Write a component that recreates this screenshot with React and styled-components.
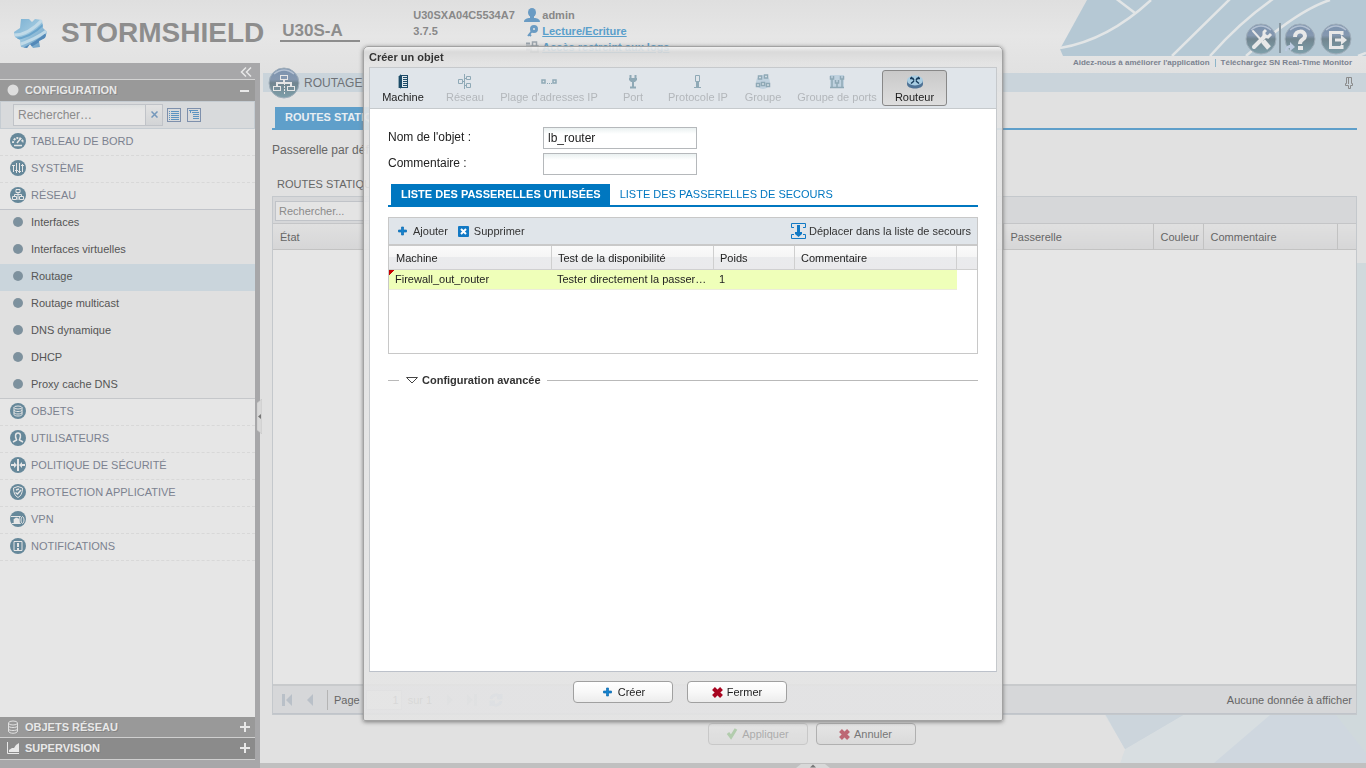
import React from "react";
import styled, { createGlobalStyle, css } from "styled-components";

const GlobalStyle = createGlobalStyle`
  *, *::before, *::after { box-sizing: border-box; }
  body {
    margin: 0;
    background: #e1e1e1;
    font-family: "Liberation Sans", Arial, sans-serif;
    font-size: 11px;
    line-height: 14px;
    color: #222;
  }
  button, input { font: inherit; color: inherit; }
  button { cursor: pointer; }
  a { color: inherit; text-decoration: none; }
  h1, h2, p, ul { margin: 0; padding: 0; font-size: inherit; font-weight: inherit; list-style: none; }
  svg { display: block; flex: none; }
`;

/* ---------- page shell ---------- */

const Shell = styled.div`
  display: flex;
  flex-direction: column;
  min-height: 100vh;
`;

const Header = styled.header`
  position: relative;
  display: flex;
  height: 73px;
  background: linear-gradient(#dfdfdf, #e6e6e6 50%, #e1e1e1);
`;

const HeaderArt = styled.svg`
  position: absolute;
  top: 0;
  right: 0;
`;

const Brand = styled.div`
  display: flex;
  align-items: flex-start;
  padding: 16px 0 0 12px;
`;

const BrandName = styled.span`
  margin: 1px 0 0 12px;
  font-size: 28px;
  line-height: 32px;
  font-weight: bold;
  color: #8d8d8d;
`;

const Model = styled.span`
  width: 80px;
  height: 26px;
  margin-left: 16px;
  padding-left: 2px;
  font-size: 17px;
  line-height: 30px;
  font-weight: bold;
  color: #8d8d8d;
  border-bottom: 2px solid #8d8d8d;
`;

const HeaderInfo = styled.div`
  display: flex;
  flex-direction: column;
  gap: 2px;
  width: 111px;
  margin-left: 53px;
  padding-top: 8px;
  font-weight: bold;
  color: #888;
`;

const UserInfo = styled.ul`
  display: flex;
  flex-direction: column;
  gap: 2px;
  padding-top: 8px;
  font-weight: bold;
  color: #888;
  li { display: flex; align-items: center; gap: 2px; height: 14px; }
  a { color: #5a9fcb; text-decoration: underline; }
`;

const HeaderTools = styled.div`
  position: relative;
  display: flex;
  flex-direction: column;
  align-items: flex-end;
  margin-left: auto;
  padding: 23px 14px 0 0;
`;

const ToolRow = styled.div`
  display: flex;
  height: 34px;
`;

const RoundTool = styled.button`
  width: 32px;
  height: 32px;
  margin-left: ${(p) => p.$gap || 0}px;
  padding: 0;
  border: 0;
  background: none;
`;

const ToolDivider = styled.span`
  width: 2px;
  height: 30px;
  margin-left: 2px;
  background: #8797a1;
`;

const HelpLinks = styled.nav`
  display: flex;
  align-items: center;
  font-size: 8px;
  line-height: 12px;
  font-weight: bold;
  color: #7b8290;
  span { width: 1px; height: 8px; margin: 0 5px; background: #8db5c9; }
`;

const Columns = styled.div`
  display: flex;
  flex: 1;
`;

/* ---------- sidebar ---------- */

const Sidebar = styled.aside`
  position: relative;
  display: flex;
  flex-direction: column;
  width: 260px;
  flex: none;
  margin-top: -10px;
  padding: 0 5px 8px 0;
  background: #a7a7a9;
`;

const CollapseRow = styled.div`
  display: flex;
  justify-content: flex-end;
  align-items: center;
  height: 17px;
  padding: 1px 2px 0 0;
  border-bottom: 1px solid #d3d3d3;
  button { padding: 0; border: 0; background: none; }
`;

const SectionBar = styled.button`
  display: flex;
  align-items: center;
  gap: 6px;
  width: 100%;
  height: ${(p) => p.$height || 21}px;
  padding: 0 5px 1px 7px;
  border: 0;
  border-bottom: ${(p) => (p.$line ? "1px solid #cfcfcf" : "0")};
  background: ${(p) => (p.$dark ? "#8b8b8b" : "#999")};
  color: #e8e8e8;
  font-weight: bold;
  text-align: left;
  text-shadow: 1px 1px 0 #848484;
  span { flex: 1; }
`;

const MenuSearch = styled.form`
  display: flex;
  align-items: center;
  height: 28px;
  padding: 0 0 0 12px;
  background: #d8dadc;
  border: 1px solid #c5ccd2;
`;

const MenuSearchInput = styled.input`
  width: 133px;
  height: 22px;
  padding: 0 4px;
  border: 1px solid #c0c3c8;
  background: linear-gradient(#dde0e0, #e6e6e6 5px);
  font-size: 12px;
  &::placeholder { color: #8b8b8b; opacity: 1; }
`;

const ClearButton = styled.button`
  display: flex;
  align-items: center;
  justify-content: center;
  width: 17px;
  height: 22px;
  margin-right: 4px;
  padding: 0 0 2px;
  border: 1px solid #c0c3c8;
  border-left: 0;
  background: linear-gradient(#e2e2e2, #d2d4d6);
`;

const ViewButton = styled.button`
  width: 14px;
  height: 14px;
  margin-right: 6px;
  padding: 0;
  border: 0;
  background: none;
`;

const Menu = styled.nav`
  flex: 1;
  background: #e6e6e6;
`;

const MenuItem = styled.a`
  display: flex;
  align-items: center;
  gap: 5px;
  height: 27px;
  padding: 0 10px 2px;
  color: #7c8290;
  border-bottom: 1px ${(p) => (p.$open ? "solid #c1c4ca" : "dashed #d8d8d8")};
`;

const SubMenu = styled.ul`
  background: #e0e0e0;
  border-bottom: 1px solid #c5c7ca;
  li:last-child a { height: 26px; }
`;

const SubItem = styled.a`
  display: flex;
  align-items: center;
  gap: 8px;
  height: 27px;
  padding: 0 13px 3px;
  color: #555;
  background: ${(p) => (p.$active ? "linear-gradient(#cad5dc, #cad5dc)" : "transparent")};
  &::before {
    content: "";
    width: 10px;
    height: 10px;
    border-radius: 50%;
    background: radial-gradient(#7b919f, #7e919d 60%, #93a1aa);
  }
`;

const SideHandle = styled.button`
  position: absolute;
  top: 336px;
  right: -2px;
  z-index: 1;
  padding: 0;
  border: 0;
  background: none;
`;

/* ---------- main area ---------- */

const Main = styled.main`
  position: relative;
  display: flex;
  flex-direction: column;
  flex: 1;
  min-width: 0;
  background: #e1e1e1;
`;

const MainArt = styled.svg`
  position: absolute;
  right: 0;
  bottom: 5px;
`;

const TitleBar = styled.div`
  display: flex;
  align-items: center;
  height: 19px;
  margin-left: 3px;
  padding: 0 12px 0 5px;
  gap: 4px;
  background: #cad4db;
  color: #6e7277;
  font-size: 12px;
  h1 { flex: 1; }
  > svg { position: relative; }
`;

const Workspace = styled.div`
  position: relative;
  display: flex;
  flex-direction: column;
  flex: 1;
  padding: 15px 9px 0 12px;
`;

const PageTabs = styled.div`
  display: flex;
  padding-left: 3px;
  border-bottom: 2px solid #5f9fca;
  button {
    height: 21px;
    padding: 0 10px 1px;
    border: 0;
    background: #5f9fca;
    color: #e8eef2;
    font-weight: bold;
  }
`;

const GatewayLine = styled.p`
  padding: 13px 0;
  font-size: 12px;
  color: #666;
`;

const PanelTitle = styled.h2`
  padding: 7px 5px 5px;
  color: #666;
`;

const RoutePanel = styled.section`
  display: flex;
  flex-direction: column;
  flex: 1;
  border: 1px solid #c4c8cc;
  background: #e6e6e6;
`;

const RouteToolbar = styled.div`
  height: 27px;
  padding: 4px 2px 0;
  background: #d6d7d9;
  border-bottom: 1px solid #c4c5c7;
  input {
    width: 180px;
    height: 20px;
    padding: 0 3px;
    border: 1px solid #c0c3c8;
    background: #e4e4e4;
  }
  input::placeholder { color: #8b8b8b; opacity: 1; }
`;

const RouteTable = styled.table`
  width: 100%;
  table-layout: fixed;
  border-collapse: collapse;
  color: #666;
  th {
    height: 25px;
    padding: 1px 6px 0 7px;
    font-weight: normal;
    text-align: left;
    background: linear-gradient(#e0e0e0, #d6d6d7);
    border-right: 1px solid #c2c2c2;
    border-bottom: 1px solid #c2c2c2;
  }
  th:last-child { border-right: 0; }
`;

const Pager = styled.div`
  display: flex;
  align-items: center;
  gap: 11px;
  height: 30px;
  margin-top: auto;
  padding: 0 4px 0 8px;
  border-top: 2px solid #c8cacc;
  border-bottom: 1px solid #c0c4ca;
  background: #d6d7d9;
  color: #666;
  button { padding: 0; border: 0; background: none; }
  label { display: flex; align-items: center; gap: 6px; padding-left: 6px; border-left: 1px solid #b4b4b4; }
  input { width: 36px; height: 20px; border: 1px solid #c0c3c8; background: #e6e6e6; text-align: right; }
  p { margin-left: auto; }
`;

const ApplyRow = styled.div`
  display: flex;
  justify-content: center;
  gap: 8px;
  height: 48px;
  padding: 8px 6px 0 0;
`;

const PushButton = styled.button`
  display: flex;
  align-items: center;
  justify-content: center;
  gap: 4px;
  width: 100px;
  height: 22px;
  padding: 0;
  border: 1px solid #a0a0a0;
  border-radius: 4px;
  color: #222;
  background: linear-gradient(#fff, #f8f8f8 50%, #ececec);
  ${(p) => p.$muted && css`
    border-color: #b0b0b0;
    color: #777;
    background: linear-gradient(#e5e5e5, #dadada);
  `}
  &:disabled { opacity: 0.5; }
`;

const BottomBar = styled.div`
  display: flex;
  justify-content: center;
  height: 5px;
  background: #c0c0c0;
  button { display: flex; align-items: center; padding: 0; border: 0; background: none; }
`;

/* ---------- dialog ---------- */

const Overlay = styled.div`
  position: fixed;
  inset: 0;
  z-index: 10;
  display: flex;
  align-items: center;
  justify-content: center;
  padding-bottom: 1px;
`;

const Dialog = styled.section`
  display: flex;
  flex-direction: column;
  width: 640px;
  max-width: 100%;
  min-height: 675px;
  padding: 0 5px;
  border: 1px solid #a2a2a2;
  border-radius: 5px 5px 2px 2px;
  background: linear-gradient(rgba(242, 242, 242, 0.9), rgba(216, 216, 216, 0.9) 5px, rgba(228, 228, 228, 0.9) 17px);
  box-shadow: 0 1px 4px #777;
`;

const DialogTitle = styled.h1`
  height: 20px;
  line-height: 20px;
  font-weight: bold;
  color: #333;
`;

const DialogPanel = styled.div`
  display: flex;
  flex-direction: column;
  flex: 1;
  border: 1px solid #c6c9cc;
  border-bottom-color: #bcc1ca;
  background: #fff;
`;

const TypeBar = styled.div`
  display: flex;
  align-items: center;
  height: 41px;
  border-bottom: 1px solid #c6cacd;
  background: #e0e5ea;
`;

const TypeButton = styled.button`
  display: flex;
  flex-direction: column;
  align-items: center;
  width: ${(p) => p.$width}px;
  height: 36px;
  padding: 3px 0 0;
  border: 1px solid transparent;
  border-radius: 3px;
  background: none;
  white-space: nowrap;
  color: #1c1c1c;
  &:disabled { color: #b3b7bb; cursor: default; }
  &[aria-pressed="true"] {
    border-color: #888;
    background: linear-gradient(#c9c9c9, #dedede);
  }
`;

const DialogBody = styled.div`
  flex: 1;
  padding: 18px 18px 0;
`;

const FieldRow = styled.div`
  display: flex;
  height: 22px;
  margin-bottom: 4px;
  font-size: 12px;
  label { width: 155px; line-height: 20px; }
  input {
    width: 154px;
    padding: 0 4px;
    border: 1px solid #b5b8bb;
    background: linear-gradient(#eaf0f0, #fff 6px);
  }
`;

const ListTabs = styled.div`
  display: flex;
  margin-top: 9px;
  padding-left: 3px;
  border-bottom: 2px solid #0077c0;
`;

const ListTab = styled.button`
  height: 21px;
  padding: 0 9px 1px 10px;
  border: 0;
  background: ${(p) => (p.$active ? "#0077c0" : "transparent")};
  color: ${(p) => (p.$active ? "#fff" : "#0077c0")};
  font-weight: ${(p) => (p.$active ? "bold" : "normal")};
`;

const GatewayBox = styled.div`
  height: 137px;
  margin-top: 10px;
  border: 1px solid #c8c8c8;
`;

const GatewayTools = styled.div`
  display: flex;
  align-items: center;
  gap: 8px;
  height: 28px;
  padding: 0 6px 0 7px;
  border-bottom: 2px solid #c9c9c9;
  background: #e0e5ea;
`;

const FlatButton = styled.button`
  display: flex;
  align-items: center;
  gap: ${(p) => (p.$end ? "3px" : "4px")};
  margin-left: ${(p) => (p.$end ? "auto" : "0")};
  padding: 0;
  border: 0;
  background: none;
  color: #333;
`;

const GatewayTable = styled.table`
  width: 100%;
  table-layout: fixed;
  border-collapse: separate;
  border-spacing: 0;
  th, td {
    padding: 0 6px 2px 5px;
    font-weight: normal;
    text-align: left;
    white-space: nowrap;
    overflow: hidden;
    text-overflow: ellipsis;
  }
  th {
    height: 24px;
    padding: 0 6px;
    background: linear-gradient(#fbfbfb, #f5f5f5 50%, #eaebed 50%, #eaeaec);
    border-right: 1px solid #cfcfcf;
    border-bottom: 1px solid #d0d0d0;
  }
  th:first-child { padding-left: 7px; }
  th:last-child { border-right: 0; }
  td { height: 20px; background: #efffb9; border-bottom: 1px solid #ececdc; }
  td:last-child { background: none; border: 0; }
  td:first-child {
    padding-left: 6px;
    background: linear-gradient(135deg, #c80000 4px, transparent 4px) no-repeat, #efffb9;
  }
`;

const Advanced = styled.div`
  display: flex;
  align-items: center;
  margin-top: 19px;
  &::before, &::after { content: ""; height: 1px; background: #b9b9b9; }
  &::before { width: 11px; }
  &::after { flex: 1; margin-left: 6px; }
  button {
    display: flex;
    align-items: center;
    gap: 4px;
    margin-left: 7px;
    padding: 0 0 1px;
    border: 0;
    background: none;
    font-weight: bold;
    color: #333;
  }
`;

const DialogActions = styled.div`
  display: flex;
  justify-content: center;
  gap: 14px;
  height: 48px;
  padding: 9px 6px 0 0;
`;

/* ---------- drawings ---------- */

const Snowflake = () => (
  <svg width="37" height="36" viewBox="0 0 37 36">
    <defs>
      <linearGradient id="flake" x1="0" y1="0" x2="1" y2="1">
        <stop offset="0" stopColor="#72abd0" />
        <stop offset=".45" stopColor="#9cc6de" />
        <stop offset="1" stopColor="#598fbb" />
      </linearGradient>
      <clipPath id="flake-edge">
        <path d="M9 3 17 3 20 6 23 3 30 4 31 12 35 16 33 22 27 25 28 31 21 32 18 28 15 32 9 31 8 24 3 21 2 16 8 12Z" />
      </clipPath>
    </defs>
    <g clipPath="url(#flake-edge)">
      <rect width="37" height="36" fill="url(#flake)" />
      <path d="M0 19C12 20 22 13 31 3M6 29C19 25 28 20 36 14" stroke="#c0dae8" strokeWidth="3" fill="none" />
      <path d="M3 23C16 22 25 15 32 8" stroke="#6ba5cc" strokeWidth="2" fill="none" />
      <path d="M12 33C20 29 27 25 34 19" stroke="#5489b8" strokeWidth="3" fill="none" />
    </g>
  </svg>
);

const Glossy = ({ children }) => (
  <svg width="32" height="32" viewBox="0 0 32 32">
    <defs>
      <linearGradient id="gloss" x1="0" y1="0" x2="0" y2="1">
        <stop offset="0" stopColor="#7b92ae" />
        <stop offset=".38" stopColor="#8598b0" />
        <stop offset=".5" stopColor="#71858f" />
        <stop offset="1" stopColor="#7fa0ab" />
      </linearGradient>
    </defs>
    <circle cx="16" cy="16" r="15" fill="url(#gloss)" stroke="#a0aeba" strokeWidth="1" />
    <path d="M6 7Q16-1 26 7" stroke="#b4c1d2" strokeWidth="1.5" fill="none" />
    {children}
  </svg>
);

const NetGlyph = () => (
  <g stroke="#e6e6e6" fill="none" shapeRendering="crispEdges">
    <path d="M12.500 8.500h7v4h-7zM5.500 19.500h7v4h-7zM19.500 19.500h7v4h-7zM9 19v-3h14v3M16 13v3" strokeWidth="1.500" />
    <path d="M16.500 16v11" strokeDasharray="2 1" />
  </g>
);

const HeaderIcon = {
  tools: (
    <g stroke="#e8e8e8" fill="none">
      <path d="M8 8 18 19" strokeWidth="2" strokeLinecap="round" />
      <path d="M18 18 24 25" strokeWidth="5" />
      <path d="M20 13 9 24" strokeWidth="4" strokeLinecap="round" />
      <path d="M21 7 19 9 19 13 23 14 26 11" strokeWidth="3" />
    </g>
  ),
  help: (
    <g fill="none">
      <path d="M11 14C11 7 21 7 21 13C21 17 16 16 16 21" stroke="#e8e8e8" strokeWidth="4" />
      <rect x="14" y="23" width="5" height="4" fill="#e8e8e8" />
      <path d="M1 28C1 24 4 22 6 22V19L11 24 6 28V25C4 25 3 26 3 28Z" fill="#bdcbe0" />
    </g>
  ),
  exit: (
    <g stroke="#e8e8e8" strokeWidth="3" fill="none">
      <path d="M22 12V9.500H10.500V24.500H22V22M15 17H22" />
      <path d="M21 12 27 17 21 22Z" fill="#e8e8e8" stroke="none" />
    </g>
  ),
};

const menuGlyphs = {
  board: <><path d="M3 10a5 5 0 0 1 10 0" strokeDasharray="2 1" strokeWidth="2" /><path d="M7 10 11 5M4 12.500h8" strokeWidth="1.500" /></>,
  system: <path d="M3.500 5v7M6.500 3v10M9.500 3v10M12.500 4v8M2 5.500h3M5 10.500h3M8 11.500h3M11 5.500h3" />,
  network: <path d="M6 2.500h4v3H6zM2.500 9.500h4v3h-4zM9.500 9.500h4v3h-4zM8 6v7M4.500 10V7.500h7V10" />,
  objects: <><ellipse cx="8" cy="4.500" rx="4" ry="1.500" /><path d="M4 4.500v7c0 2 8 2 8 0v-7M4 7c0 2 8 2 8 0M4 9.500c0 2 8 2 8 0" /></>,
  users: <path d="M6.500 9C5 7 5 3 8 3s3 4 1.500 6M6.500 9v1L3 12M9.500 9v1L13 12" strokeWidth="1.500" />,
  policy: <><path d="M8 2v12M1 8h4M15 8h-4" strokeWidth="2" /><path d="M4 5 7 8 4 11ZM12 5 9 8 12 11Z" fill="#e6e6e6" stroke="none" /></>,
  shield: <><path d="M8 2.500 12.500 4C12.500 9 11 12 8 13.500 5 12 3.500 9 3.500 4Z" /><path d="M5.500 8.500 7.500 10 11 6M6 6 9 5" strokeWidth="1.500" /></>,
  vpn: <><path d="M1 5.500h9.500M2 12.500h8.500M10.500 5.500c-2 1-2 6 0 7M12.500 5.500c-2 1-2 6 0 7 2-1 2-6 0-7" /><path d="M4 8h5v4H4zM5.500 8V7h2v1" fill="#e6e6e6" stroke="#e6e6e6" strokeWidth=".7" /></>,
  notif: <><path d="M4 3.500h8v9H4z" /><path d="M8 5v4M8 10v2" strokeWidth="2" /></>,
};

const MenuIcon = ({ name }) => (
  <svg width="16" height="16" viewBox="0 0 16 16">
    <circle cx="8" cy="8" r="8" fill="#66889a" />
    <g stroke="#e6e6e6" fill="none">{menuGlyphs[name]}</g>
  </svg>
);

const ListIcon = ({ tree }) => (
  <svg width="14" height="14" viewBox="0 0 14 14" fill="none" stroke="#5c93c0" shapeRendering="crispEdges">
    <rect x=".5" y=".5" width="13" height="13" stroke="#7e90ac" />
    {tree ? <path d="M2 2.500h9M5 4.500h7M6 6.500h6M6 8.500h6M6 10.500h6M3.500 3v2" /> : <path d="M2 3.500h1M4 3.500h8M2 5.500h1M4 5.500h8M2 7.500h1M4 7.500h8M2 9.500h1M4 9.500h8M2 11.500h1M4 11.500h8" />}
  </svg>
);

const Plus = () => (
  <svg width="10" height="10" viewBox="0 0 10 10" stroke="#e8e8e8" strokeWidth="2"><path d="M5 0v10M0 5h10" /></svg>
);

const BluePlus = () => (
  <svg width="13" height="12" viewBox="0 0 13 12"><path d="M5.500 2h2v3h3v2h-3v3h-2V7h-3V5h3Z" fill="#1583cf" stroke="#0e6bb0" strokeWidth=".7" /></svg>
);

const RedCross = ({ muted }) => (
  <svg width="11" height="11" viewBox="0 0 11 11" stroke={muted ? "#bd6875" : "#a80520"} strokeWidth="4">
    <path d="M1.500 1.500 9.500 9.500M9.500 1.500 1.500 9.500" />
  </svg>
);

const typeIcons = {
  machine: <g shapeRendering="crispEdges"><path d="M3 3 5 1v13L3 13Z" fill="#3b6a88" /><path d="M5.500 1.500h7v12h-7z" fill="#e0e8ec" stroke="#1d4b68" /><path d="M8 3.500h4M8 5.500h4M8 7.500h4M8 9.500h4M8 11.500h4M6.500 2v12M4.500 2v12" stroke="#1d4b68" /></g>,
  network: <path d="M1.500 5.500h4v4h-4zM9.500 2.500h4v3h-4zM9.500 9.500h4v4h-4zM7.500 0v15M6 7.500h2M8 4.500h2M8 11.500h2" />,
  range: <><path d="M1 6h3v3h-3zM12 6h3v3h-3z" strokeWidth="1.500" /><path d="M6 9.500h1M8 9.500h1M10 9.500h1" /></>,
  port: <><path d="M5.500 1v4M10.500 1v4M8 8v5M5 13.500h6" strokeWidth="2" /><path d="M4 4h8v2L10 8H6L4 6Z" fill="#8fa9b6" stroke="none" /></>,
  protocol: <><path d="M5.500 1.500h4v6h-4z" /><path d="M7.500 8v5" strokeWidth="3" /><path d="M4 13.500h7" /></>,
  group: <><circle cx="8" cy="8" r="7" fill="#c0d2df" stroke="none" /><path d="M3.500 2h3v3h-3zM9.500 1h3v3h-3zM1.500 9.500h3v3h-3zM6.500 8.500h3v3h-3zM11.500 9.500h3v3h-3z" fill="#e7edf0" strokeWidth="1.500" /></>,
  ports: <><path d="M1 1h14v13H1z" fill="#c0d2df" stroke="none" /><path d="M1.500 2v3h3V2M3 5v8M6.500 6v3h3V6M8 9v5M11.500 2v3h3V2M13 5v8M1 13.500h14" strokeWidth="1.500" /></>,
  router: <><path d="M0 6v4c0 6 16 6 16 0V6Z" fill="#4f7396" stroke="none" /><ellipse cx="8" cy="6.500" rx="8" ry="5" fill="#a9cde2" stroke="none" /><path d="M3 4.500 6 4.500 7 6.500M13 4.500 10 4.500 9 6.500M4 9.500 7 7M12 9.500 9 7M4 3 6.500 5.500M12 3 9.500 5.500" stroke="#173c5c" strokeWidth="1.500" /></>,
};

const TypeIcon = ({ name }) => (
  <svg width="16" height="16" viewBox="0 0 16 16" fill="none" stroke="#8fa9b6">{typeIcons[name]}</svg>
);

/* ---------- data ---------- */

const types = [
  ["machine", "Machine", 66], ["network", "Réseau", 58], ["range", "Plage d'adresses IP", 110],
  ["port", "Port", 58], ["protocol", "Protocole IP", 72], ["group", "Groupe", 58],
  ["ports", "Groupe de ports", 90], ["router", "Routeur", 65],
];

const firstItems = [["board", "TABLEAU DE BORD"], ["system", "SYSTÈME"], ["network", "RÉSEAU"]];
const subItems = ["Interfaces", "Interfaces virtuelles", "Routage", "Routage multicast", "DNS dynamique", "DHCP", "Proxy cache DNS"];
const lastItems = [
  ["objects", "OBJETS"], ["users", "UTILISATEURS"], ["policy", "POLITIQUE DE SÉCURITÉ"],
  ["shield", "PROTECTION APPLICATIVE"], ["vpn", "VPN"], ["notif", "NOTIFICATIONS"],
];

/* ---------- sections ---------- */

const TopHeader = () => (
  <Header>
    <HeaderArt width="306" height="56" viewBox="0 0 306 56">
      <path d="M27 0H306V56H3L0 49Z" fill="#b5c8d4" />
      <path d="M0 48Q48 40 91 0M54-3 75 13M112 56 171-2M150 56Q180 22 213-1M186 56Q238 10 270 0M298 56 306 53" stroke="#e2e5e6" strokeWidth="2.500" fill="none" />
    </HeaderArt>
    <Brand>
      <Snowflake />
      <BrandName>STORMSHIELD</BrandName>
      <Model>U30S-A</Model>
    </Brand>
    <HeaderInfo><span>U30SXA04C5534A7</span><span>3.7.5</span></HeaderInfo>
    <UserInfo>
      <li>
        <svg width="16" height="14" viewBox="0 0 16 14" fill="#6a9bc3"><ellipse cx="8" cy="4.500" rx="4" ry="4.500" /><path d="M6 8h4v2c3 0 6 1 6 4H0c0-3 3-4 6-4Z" /></svg>
        admin
      </li>
      <li>
        <svg width="16" height="14" viewBox="0 0 16 14" fill="none" stroke="#6a9bc3"><circle cx="10" cy="5" r="2.500" strokeWidth="3" /><path d="M8 7 4 12M5 10l2 2" strokeWidth="2" /></svg>
        <a href="#mode">Lecture/Ecriture</a>
      </li>
      <li>
        <svg width="16" height="14" viewBox="0 0 16 14" fill="none" stroke="#9aa4ac"><path d="M2 3.500h4M2 6.500h4M2 9.500h4" strokeWidth="2" /><path d="M7 6h7v6H7zM8.500 6V2h4v4" strokeWidth="1.500" /></svg>
        <a href="#logs">Accès restreint aux logs</a>
      </li>
    </UserInfo>
    <HeaderTools>
      <ToolRow>
        <RoundTool aria-label="Outils"><Glossy>{HeaderIcon.tools}</Glossy></RoundTool>
        <ToolDivider />
        <RoundTool $gap={3} aria-label="Aide"><Glossy>{HeaderIcon.help}</Glossy></RoundTool>
        <RoundTool $gap={4} aria-label="Quitter"><Glossy>{HeaderIcon.exit}</Glossy></RoundTool>
      </ToolRow>
      <HelpLinks>
        <a href="#aide">Aidez-nous à améliorer l'application</a>
        <span />
        <a href="#monitor">Téléchargez SN Real-Time Monitor</a>
      </HelpLinks>
    </HeaderTools>
  </Header>
);

const SideMenu = () => (
  <Sidebar>
    <CollapseRow>
      <button aria-label="Replier le menu">
        <svg width="13" height="10" viewBox="0 0 13 10" fill="none" stroke="#e8e8e8" strokeWidth="1.500"><path d="M6 .5 1.500 5 6 9.500M11 .5 6.500 5 11 9.500" /></svg>
      </button>
    </CollapseRow>
    <SectionBar>
      <svg width="12" height="12" viewBox="0 0 12 12"><circle cx="6" cy="6" r="5.500" fill="#dedede" /></svg>
      <span>CONFIGURATION</span>
      <svg width="10" height="10" viewBox="0 0 10 10" stroke="#e8e8e8" strokeWidth="2"><path d="M0 6h9" /></svg>
    </SectionBar>
    <MenuSearch>
      <MenuSearchInput aria-label="Rechercher" placeholder="Rechercher…" />
      <ClearButton type="button" aria-label="Effacer">
        <svg width="7" height="7" viewBox="0 0 7 7" stroke="#7598bb" strokeWidth="1.500"><path d="M.5.5 6.500 6.500M6.500.5.5 6.500" /></svg>
      </ClearButton>
      <ViewButton type="button" aria-label="Liste"><ListIcon /></ViewButton>
      <ViewButton type="button" aria-label="Arborescence"><ListIcon tree /></ViewButton>
    </MenuSearch>
    <Menu>
      {firstItems.map(([icon, text]) => (
        <MenuItem key={text} href="#menu" $open={icon === "network"}><MenuIcon name={icon} />{text}</MenuItem>
      ))}
      <SubMenu>
        {subItems.map((text) => <li key={text}><SubItem href="#page" $active={text === "Routage"}>{text}</SubItem></li>)}
      </SubMenu>
      {lastItems.map(([icon, text]) => (
        <MenuItem key={text} href="#menu"><MenuIcon name={icon} />{text}</MenuItem>
      ))}
    </Menu>
    <SectionBar $line>
      <svg width="12" height="14" viewBox="0 0 12 14" fill="none" stroke="#e0e0e0"><ellipse cx="6" cy="3" rx="4.500" ry="2" /><path d="M1.500 3v8c0 3 9 3 9 0V3M1.500 6c0 2 9 2 9 0M1.500 9c0 2 9 2 9 0" /></svg>
      <span>OBJETS RÉSEAU</span>
      <Plus />
    </SectionBar>
    <SectionBar $line $dark $height={22}>
      <svg width="12" height="12" viewBox="0 0 12 12"><path d="M.5 0v11.500H12" stroke="#e8e8e8" fill="none" /><path d="M2 10V8L5 6 7 6 9 3 12 1V10Z" fill="#e8e8e8" /></svg>
      <span>SUPERVISION</span>
      <Plus />
    </SectionBar>
    <SideHandle aria-label="Redimensionner">
      <svg width="5" height="35" viewBox="0 0 5 35"><path d="M5 0V35L0 31V4Z" fill="#d8d8d8" stroke="#c0c0c0" strokeWidth=".5" /><path d="M1 17.500 4 15v5Z" fill="#777" /></svg>
    </SideHandle>
  </Sidebar>
);

const RoutingPage = () => (
  <Main>
    <MainArt width="332" height="500" viewBox="0 0 332 500">
      <path d="M322 440H332V500H86L91 486 40 400H322Z" fill="#d8dee1" />
      <path d="M322 0H332V500H300Z" fill="#d0d9dc" />
      <path d="M72 452H149L91 486Z" fill="#ccd5dc" />
      <path d="M236 452H302L332 490V500H180Z" fill="#cfd7df" />
      <path d="M2 452 9 452" stroke="#ccd5dc" strokeWidth="2" />
      <path d="M10 440H86L70 452 91 486 86 500H0V454Z" fill="#e1e1e1" />
      <path d="M72 452H149L91 486Z" fill="#ccd5dc" />
    </MainArt>
    <TitleBar>
      <Glossy><NetGlyph /></Glossy>
      <h1>ROUTAGE</h1>
      <svg width="11" height="13" viewBox="0 0 11 13" fill="none" stroke="#8b8b8b"><path d="M3.500 1.500h5v6h1v2h-2v3h-2v-3h-3v-2h1ZM5.500 2v6" /></svg>
    </TitleBar>
    <Workspace>
      <PageTabs><button>ROUTES STATIQUES</button></PageTabs>
      <GatewayLine>Passerelle par défaut (routeur) :</GatewayLine>
      <PanelTitle>ROUTES STATIQUES</PanelTitle>
      <RoutePanel>
        <RouteToolbar><input aria-label="Rechercher une route" placeholder="Rechercher..." /></RouteToolbar>
        <RouteTable>
          <colgroup><col /><col width="150" /><col width="50" /><col width="134" /><col width="19" /></colgroup>
          <thead><tr><th>État</th><th>Passerelle</th><th>Couleur</th><th>Commentaire</th><th aria-label="Colonnes" /></tr></thead>
        </RouteTable>
        <Pager>
          <button aria-label="Première page"><svg width="12" height="12" viewBox="0 0 12 12" fill="#b9c0c8"><path d="M1 0h3v12H1zM11 0v12L5 6Z" /></svg></button>
          <button aria-label="Page précédente"><svg width="12" height="12" viewBox="0 0 12 12" fill="#b9c0c8"><path d="M9 0v12L3 6Z" /></svg></button>
          <label>Page <input defaultValue="1" /> sur 1</label>
          <button aria-label="Page suivante"><svg width="12" height="12" viewBox="0 0 12 12" fill="#b9c0c8"><path d="M4 0v12L10 6Z" /></svg></button>
          <button aria-label="Dernière page"><svg width="12" height="12" viewBox="0 0 12 12" fill="#b9c0c8"><path d="M1 0v12L7 6ZM8 0h3v12H8z" /></svg></button>
          <button aria-label="Actualiser"><svg width="14" height="14" viewBox="0 0 14 14" fill="none" stroke="#9fb5cf" strokeWidth="3"><path d="M2 6a5 5 0 0 1 9-2M12 8a5 5 0 0 1-9 2M12 1v4H8M2 13V9h4" /></svg></button>
          <p>Aucune donnée à afficher</p>
        </Pager>
      </RoutePanel>
      <ApplyRow>
        <PushButton $muted disabled>
          <svg width="12" height="12" viewBox="0 0 12 12" fill="none" stroke="#84b87a" strokeWidth="3"><path d="M2 5 5 9 10 1" /></svg>
          Appliquer
        </PushButton>
        <PushButton $muted><RedCross muted />Annuler</PushButton>
      </ApplyRow>
    </Workspace>
    <BottomBar>
      <button aria-label="Déplier"><svg width="34" height="5" viewBox="0 0 34 5"><path d="M0 5 5 1H29L34 5Z" fill="#d8d8d8" /><path d="M14 4.500 17 1.500 20 4.500Z" fill="#777" /></svg></button>
    </BottomBar>
  </Main>
);

const CreateDialog = () => (
  <Overlay>
    <Dialog role="dialog" aria-labelledby="dialog-title">
      <DialogTitle id="dialog-title">Créer un objet</DialogTitle>
      <DialogPanel>
        <TypeBar>
          {types.map(([icon, text, width]) => (
            <TypeButton key={icon} $width={width} disabled={icon !== "machine" && icon !== "router"} aria-pressed={icon === "router"}>
              <TypeIcon name={icon} />{text}
            </TypeButton>
          ))}
        </TypeBar>
        <DialogBody>
          <FieldRow><label htmlFor="object-name">Nom de l'objet :</label><input id="object-name" defaultValue="lb_router" /></FieldRow>
          <FieldRow><label htmlFor="object-comment">Commentaire :</label><input id="object-comment" /></FieldRow>
          <ListTabs role="tablist">
            <ListTab role="tab" aria-selected="true" $active>LISTE DES PASSERELLES UTILISÉES</ListTab>
            <ListTab role="tab" aria-selected="false">LISTE DES PASSERELLES DE SECOURS</ListTab>
          </ListTabs>
          <GatewayBox>
            <GatewayTools>
              <FlatButton><BluePlus />Ajouter</FlatButton>
              <FlatButton>
                <svg width="14" height="12" viewBox="0 0 14 12"><rect x="2" y="1" width="11" height="11" rx="1" fill="#1279c4" /><path d="M5 4 10 9M10 4 5 9" stroke="#fff" strokeWidth="2" /></svg>
                Supprimer
              </FlatButton>
              <FlatButton $end>
                <svg width="15" height="16" viewBox="0 0 15 16" fill="none" stroke="#1279c4"><path d="M3 4.500H.5V.5h14v4H12M3 11.500H.5v4h14v-4H12" /><path d="M4 9h2V2h3v7h2v2l-3.500 3L4 11Z" fill="#1279c4" stroke="none" /></svg>
                Déplacer dans la liste de secours
              </FlatButton>
            </GatewayTools>
            <GatewayTable>
              <colgroup><col width="163" /><col width="162" /><col width="81" /><col width="162" /><col /></colgroup>
              <thead><tr><th>Machine</th><th>Test de la disponibilité</th><th>Poids</th><th>Commentaire</th><th aria-label="Colonnes" /></tr></thead>
              <tbody><tr><td>Firewall_out_router</td><td>Tester directement la passerelle</td><td>1</td><td /><td /></tr></tbody>
            </GatewayTable>
          </GatewayBox>
          <Advanced>
            <button>
              <svg width="12" height="8" viewBox="0 0 12 8" fill="none" stroke="#444"><path d="M.5 1.500h11L6 7Z" /></svg>
              Configuration avancée
            </button>
          </Advanced>
        </DialogBody>
      </DialogPanel>
      <DialogActions>
        <PushButton><BluePlus />Créer</PushButton>
        <PushButton><RedCross />Fermer</PushButton>
      </DialogActions>
    </Dialog>
  </Overlay>
);

export default function App() {
  return (
    <>
      <GlobalStyle />
      <Shell>
        <TopHeader />
        <Columns>
          <SideMenu />
          <RoutingPage />
        </Columns>
      </Shell>
      <CreateDialog />
    </>
  );
}
